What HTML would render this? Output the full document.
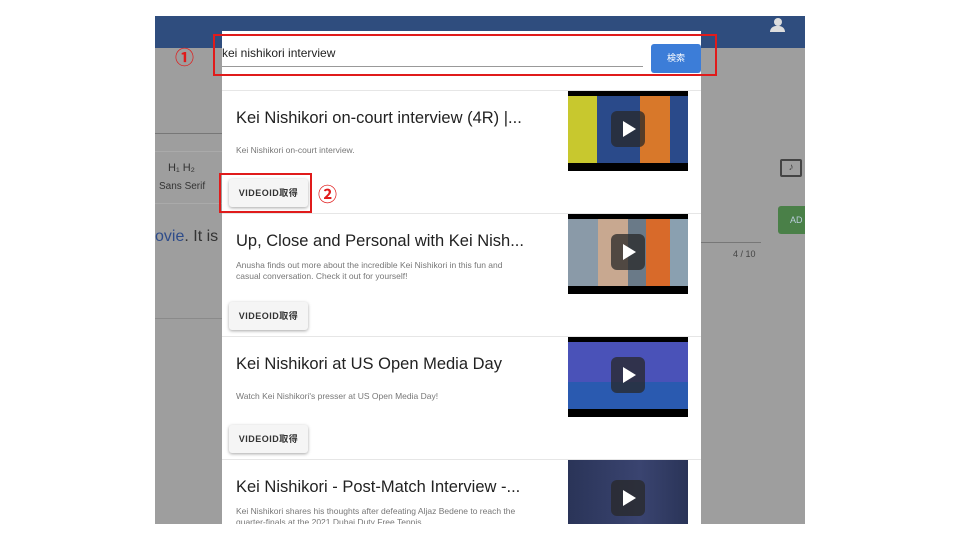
<!DOCTYPE html>
<html><head><meta charset="utf-8"><style>
*{margin:0;padding:0;box-sizing:border-box}
body{width:960px;height:540px;background:#fff;position:relative;overflow:hidden;font-family:"Liberation Sans","Noto Sans CJK JP",sans-serif}
.abs{position:absolute}
#bg{left:155px;top:16px;width:650px;height:508px;background:#9e9e9e;overflow:hidden}
#hdr{left:0;top:0;width:650px;height:32px;background:#2f4d7e}
#dlg{left:67px;top:15px;width:479px;height:493px;background:#fff;overflow:hidden}
.card{position:absolute;left:0;width:479px;height:122px;border-top:1px solid #e6e6e6}
.t{position:absolute;left:14px;top:18px;font-size:16.5px;color:#222;white-space:nowrap}
.d{position:absolute;left:14px;font-size:8.5px;color:#777;line-height:11px;width:280px}
.b{position:absolute;left:7px;width:79px;height:28px;background:#f5f5f5;border-radius:3px;box-shadow:0 1px 3px rgba(0,0,0,.35);font-size:9px;font-weight:bold;color:#333;letter-spacing:.5px;text-align:center;line-height:28px}
.th{position:absolute;left:346px;top:0;width:120px;height:80px;background:#000;overflow:hidden}
.th .img{position:absolute;left:0;top:5px;width:120px;height:67px}
.pl{position:absolute;left:43px;top:20px;width:34px;height:36px;background:rgba(40,40,40,.75);border-radius:6px}
.pl:after{content:"";position:absolute;left:12px;top:10px;border-left:13px solid #fff;border-top:8px solid transparent;border-bottom:8px solid transparent}
.red{position:absolute;border:2px solid #e01b1b}
.num{position:absolute;color:#e01b1b;font-size:19px;font-weight:bold}
</style></head><body>
<div id="bg" class="abs">
 <div id="hdr" class="abs"></div>
 <div class="abs" style="left:619px;top:2px;width:8px;height:8px;border-radius:50%;background:#ddd"></div>
 <div class="abs" style="left:615px;top:10px;width:15px;height:6px;border-radius:6px 6px 0 0;background:#ddd"></div>
 <div class="abs" style="left:0;top:117px;width:70px;height:1px;background:#777"></div>
 <div class="abs" style="left:0;top:135px;width:70px;height:1px;background:#aaa"></div>
 <div class="abs" style="left:13px;top:146px;font-size:11px;color:#333">H₁ H₂</div>
 <div class="abs" style="left:4px;top:165px;font-size:10px;color:#333">Sans Serif</div>
 <div class="abs" style="left:0;top:187px;width:70px;height:1px;background:#aaa"></div>
 <div class="abs" style="left:0;top:212px;font-size:16px;color:#333"><span style="color:#2e4c8a">ovie</span>. It is</div>
 <div class="abs" style="left:0;top:302px;width:70px;height:1px;background:#8a8a8a"></div>
 <div class="abs" style="left:546px;top:226px;width:60px;height:1px;background:#777"></div>
 <div class="abs" style="left:578px;top:233px;font-size:9px;color:#444">4 / 10</div>
 <div class="abs" style="left:625px;top:143px;width:22px;height:18px;border:2px solid #444;border-radius:2px;font-size:10px;text-align:center;color:#444;line-height:14px">♪</div>
 <div class="abs" style="left:623px;top:190px;width:40px;height:28px;background:#4a8048;border-radius:3px;color:#bcd;font-size:9px;line-height:28px;padding-left:12px">AD</div>
 <div id="dlg" class="abs">
  <div class="abs" style="left:0;top:15px;font-size:12px;color:#222">kei nishikori interview</div>
  <div class="abs" style="left:0;top:35px;width:421px;height:1px;background:#999"></div>
  <div class="abs" style="left:429px;top:13px;width:50px;height:29px;background:#3c7dd8;border-radius:3px;color:#fff;font-size:9px;text-align:center;line-height:29px">検索</div>
  <div class="card" style="top:59px">
   <div class="t">Kei Nishikori on-court interview (4R) |...</div>
   <div class="d" style="top:54px">Kei Nishikori on-court interview.</div>
   <div class="b" style="top:88px">VIDEOID取得</div>
   <div class="th"><div class="img" style="background:linear-gradient(90deg,#c8c82e 0 24%,#2a4a8a 24% 60%,#d8782a 60% 85%,#2a4a8a 85%)"></div><div class="pl"></div></div>
  </div>
  <div class="card" style="top:182px">
   <div class="t">Up, Close and Personal with Kei Nish...</div>
   <div class="d" style="top:46px">Anusha finds out more about the incredible Kei Nishikori in this fun and casual conversation. Check it out for yourself!</div>
   <div class="b" style="top:88px">VIDEOID取得</div>
   <div class="th"><div class="img" style="background:linear-gradient(90deg,#8a9aa8 0 25%,#c8a890 25% 50%,#6a7a88 50% 65%,#d86a2a 65% 85%,#8aa0b0 85%)"></div><div class="pl"></div></div>
  </div>
  <div class="card" style="top:305px">
   <div class="t">Kei Nishikori at US Open Media Day</div>
   <div class="d" style="top:54px">Watch Kei Nishikori's presser at US Open Media Day!</div>
   <div class="b" style="top:88px">VIDEOID取得</div>
   <div class="th"><div class="img" style="background:linear-gradient(180deg,#4a52b8 0 60%,#2a5ab0 60%)"></div><div class="pl"></div></div>
  </div>
  <div class="card" style="top:428px">
   <div class="t">Kei Nishikori - Post-Match Interview -...</div>
   <div class="d" style="top:46px">Kei Nishikori shares his thoughts after defeating Aljaz Bedene to reach the quarter-finals at the 2021 Dubai Duty Free Tennis</div>
   <div class="th"><div class="img" style="top:0;height:80px;background:linear-gradient(90deg,#2a3458,#3a4470 60%,#2a3458)"></div><div class="pl"></div></div>
  </div>
 </div>
</div>
<div class="red" style="left:213px;top:34px;width:504px;height:42px"></div>
<div class="num" style="left:175px;top:43px">①</div>
<div class="red" style="left:219px;top:173px;width:93px;height:40px"></div>
<div class="num" style="left:318px;top:180px">②</div>
</body></html>
